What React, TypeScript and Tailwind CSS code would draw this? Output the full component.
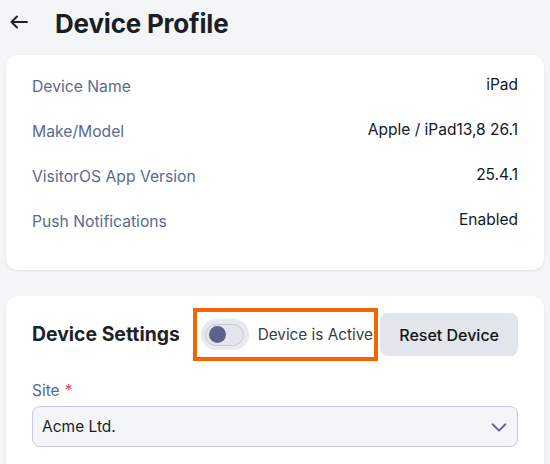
import React from "react";

const Row = ({ label, value }: { label: string; value: string }) => (
  <div className="flex items-start justify-between h-[45px]">
    <span className="text-[15.7px] text-[#5b6a8f] mt-[3px]">{label}</span>
    <span className="text-[15.5px] text-[#111827] mt-[1px]">{value}</span>
  </div>
);

export default function App() {
  return (
    <div
      className="w-[550px] h-[464px] bg-[#f4f5f7] overflow-hidden"
      style={{ fontFamily: "Inter, 'Noto Sans', sans-serif" }}
    >
      <div className="flex items-center h-[44px] pl-[10px] pt-[0px]">
        <svg width="18" height="14" viewBox="0 0 18 14" fill="none" stroke="#1f2329" strokeWidth="2" strokeLinecap="round" strokeLinejoin="round">
          <path d="M17 7H1.5M7 1.5L1.5 7L7 12.5" />
        </svg>
        <h1 className="ml-[27px] mt-[3px] text-[26px] font-bold text-[#1b1e24] tracking-[-0.2px]">Device Profile</h1>
      </div>
      <div className="mx-[6px] mt-[11px] h-[215px] bg-white rounded-[12px] shadow-[0_1px_3px_rgba(0,0,0,0.08)] px-[26px] pt-[17px]">
        <Row label="Device Name" value="iPad" />
        <Row label="Make/Model" value="Apple / iPad13,8 26.1" />
        <Row label="VisitorOS App Version" value="25.4.1" />
        <Row label="Push Notifications" value="Enabled" />
      </div>
      <div className="mx-[6px] mt-[26px] h-[200px] bg-white rounded-[12px] shadow-[0_1px_3px_rgba(0,0,0,0.08)] px-[26px] pt-[12px]">
        <div className="flex items-center">
          <h2 className="text-[19.4px] font-bold text-[#1f2329] w-[161px] mt-[1px]">Device Settings</h2>
          <div className="flex items-center border-[4px] border-[#f46500] h-[53px] w-[186px] pl-[4px]">
            <div className="w-[48px] h-[31px] rounded-full bg-[#e8eaf0] flex items-center justify-center">
              <div className="w-[39px] h-[22px] rounded-full bg-[#e3e6ed] border border-[#c7cbd8] flex items-center pl-[3px]">
                <div className="w-[17px] h-[17px] rounded-full bg-[#5b6488]" />
              </div>
            </div>
            <span className="ml-[9px] mt-[2px] text-[15.3px] text-[#3a3d44]">Device is Active</span>
          </div>
          <button className="ml-[2px] w-[138px] h-[43px] rounded-[8px] bg-[#e2e5eb] text-[16px] font-medium text-[#111318]">
            Reset Device
          </button>
        </div>
        <div className="mt-[18px] text-[15.5px] text-[#5b6a8f] flex items-start">
          Site<span className="text-[#e5484d] ml-[5px]">*</span>
        </div>
        <div className="mt-[4px] h-[41px] rounded-[8px] border border-[#c8ccd8] bg-[#f4f5f8] flex items-center justify-between pl-[9px] pr-[7px]">
          <span className="text-[15.5px] text-[#1b1e24]">Acme Ltd.</span>
          <svg width="22" height="22" viewBox="0 0 24 24" fill="none" stroke="#5b6488" strokeWidth="2" strokeLinecap="round" strokeLinejoin="round">
            <path d="M5 9l7 7 7-7" />
          </svg>
        </div>
      </div>
    </div>
  );
}
